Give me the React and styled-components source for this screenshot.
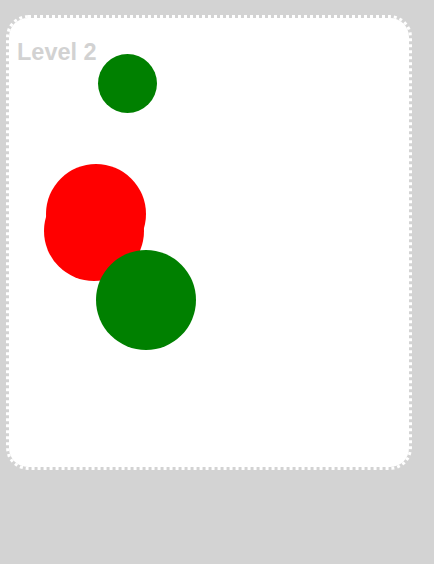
import React from "react";
import styled, { createGlobalStyle } from "styled-components";

const GlobalStyle = createGlobalStyle`
  html, body {
    margin: 0;
    padding: 0;
    background: #d3d3d3;
    font-family: "Liberation Sans", Arial, sans-serif;
  }
`;

const Page = styled.div`
  width: 434px;
  height: 564px;
  padding: 15px 0 0 6px;
  box-sizing: border-box;
`;

const Board = styled.div`
  position: relative;
  width: 406px;
  height: 455px;
  box-sizing: border-box;
  background: #fff;
  background-clip: padding-box;
  border: 3px dotted #fff;
  border-radius: 22px;
`;

const Label = styled.div`
  position: absolute;
  left: 8px;
  top: 21px;
  font-size: 23.5px;
  font-weight: 700;
  color: #d2d2d2;
`;

const Ball = styled.div`
  position: absolute;
  border-radius: 50%;
  background: ${props => props.color};
`;

// positions relative to the board content box (page offset 9, 18)
const balls = [
  { x: 96, y: 214, r: 50, color: "#ff0000" },
  { x: 94, y: 231, r: 50, color: "#ff0000" },
  { x: 146, y: 300, r: 50, color: "#008000" },
  { x: 127, y: 83, r: 29.5, color: "#008000" }
];

export default function App() {
  return (
    <>
      <GlobalStyle />
      <Page>
        <Board>
          <Label>Level 2</Label>
          {balls.map((b, i) => (
            <Ball
              key={i}
              color={b.color}
              style={{
                left: b.x - b.r - 9,
                top: b.y - b.r - 18,
                width: b.r * 2,
                height: b.r * 2
              }}
            />
          ))}
        </Board>
      </Page>
    </>
  );
}
